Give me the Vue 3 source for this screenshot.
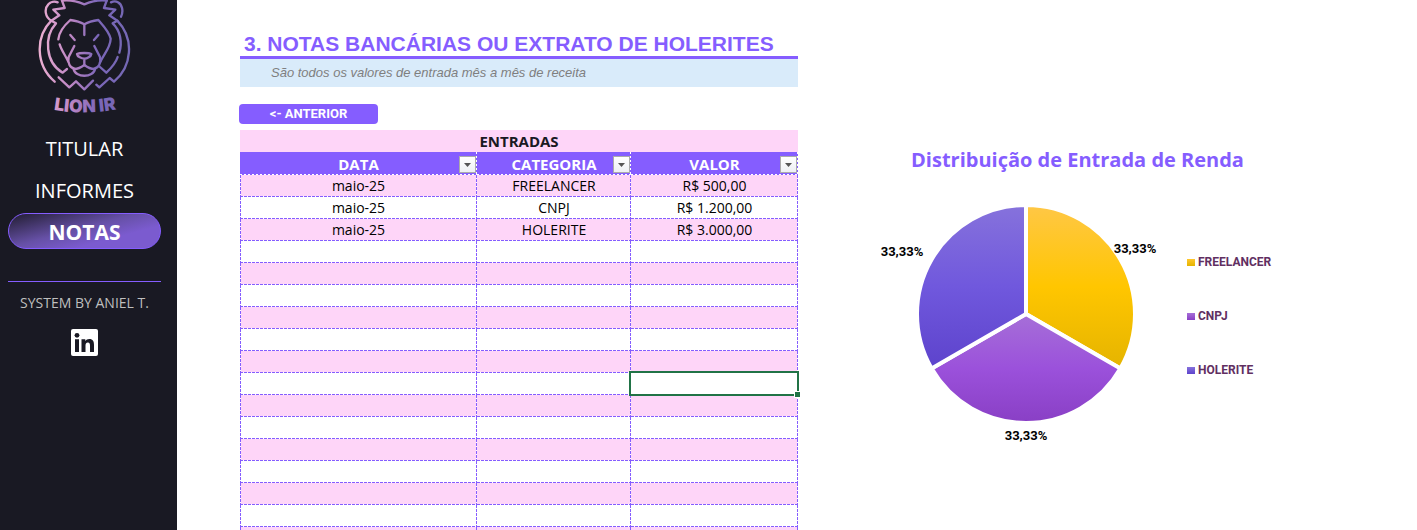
<script setup>
const entries = [
  { date: 'maio-25', category: 'FREELANCER', value: 'R$ 500,00' },
  { date: 'maio-25', category: 'CNPJ', value: 'R$ 1.200,00' },
  { date: 'maio-25', category: 'HOLERITE', value: 'R$ 3.000,00' },
]
const blankRows = 14
const rows = [
  ...entries,
  ...Array.from({ length: blankRows }, () => ({ date: '', category: '', value: '' })),
]
const selectedRow = 9
const columns = ['DATA', 'CATEGORIA', 'VALOR']
const legend = [
  { label: 'FREELANCER', tone: 'gold' },
  { label: 'CNPJ', tone: 'violet' },
  { label: 'HOLERITE', tone: 'indigo' },
]
</script>

<template>
  <div class="page">
    <aside class="sidebar">
      <svg class="logo" viewBox="-1 0 390 372" role="img" aria-label="Lion IR">
        <defs>
          <linearGradient id="lion" gradientUnits="userSpaceOnUse" x1="55" y1="0" x2="328" y2="0">
            <stop offset="0" stop-color="#eeb0d2" />
            <stop offset="0.35" stop-color="#bd86c4" />
            <stop offset="0.65" stop-color="#7b66b8" />
            <stop offset="1" stop-color="#7468b4" />
          </linearGradient>
          <path id="arc" d="M70 324Q194 352 318 322" />
        </defs>
        <g fill="none" stroke="url(#lion)" stroke-width="7" stroke-linecap="round" stroke-linejoin="round">
          <path d="M93 62C74 52 71 26 84 13C91 5 103 3 112 7M125 2L133 24L99 29L117 46L93 62C45 110 45 195 103 245" />
          <path d="M302 50C311 32 304 12 293 7C286 3 278 4 272 7M259 2L251 24L285 29L267 46L291 62C344 118 334 200 281 245L268 234L237 262L228 254" />
          <path d="M125 2C155 -1 174 5 192 13C210 5 229 -1 259 2" />
          <path d="M93 62L107 70C70 110 75 188 127 218L140 207" />
          <path d="M291 62L277 70C301 92 306 128 297 158M292 171C286 190 272 205 258 218L239 201" />
          <path d="M114 118C116 94 132 76 150 60C165 62 180 66 192 73C204 66 219 62 234 60C248 76 266 94 271 116C270 146 248 164 239 188" />
          <path d="M192 73V105M150 105L163 120M234 105L221 120" />
          <path d="M118 133C124 153 137 168 145 188M162 138L145 171C141 189 149 203 162 206M222 138L239 171C243 189 235 203 222 206" />
          <path d="M170 162C178 158 206 158 213 162C212 170 200 176 192 176C184 176 171 170 170 162ZM192 177V195" />
          <path d="M160 207C174 208 184 201 192 195C200 201 210 208 224 207C220 234 164 234 160 207" />
          <path d="M115 232L147 262L167 244L192 268L218 242" />
        </g>
        <text class="logo-name" fill="url(#lion)" text-anchor="middle">
          <textPath href="#arc" startOffset="50%">LION IR</textPath>
        </text>
      </svg>
      <nav class="menu">
        <a href="#titular">TITULAR</a>
        <a href="#informes">INFORMES</a>
        <a href="#notas" class="active" aria-current="page">NOTAS</a>
      </nav>
      <hr class="divider" />
      <p class="credit">SYSTEM BY ANIEL T.</p>
      <a class="linkedin" href="#linkedin" aria-label="LinkedIn">
        <svg viewBox="0 0 27 27" aria-hidden="true">
          <rect width="27" height="27" rx="2" fill="#fff" />
          <g fill="#191923">
            <circle cx="6" cy="6.300" r="2.400" />
            <path d="M4 10.200H8V23H4ZM10.500 10.200H14.300V12C15.100 10.700 16.500 9.900 18.300 9.900C22 9.900 23 12.300 23 16V23H19V16.800C19 14.800 18.700 13.400 16.900 13.400C15 13.400 14.500 14.800 14.500 16.700V23H10.500Z" />
          </g>
        </svg>
      </a>
    </aside>

    <main class="sheet">
      <section class="entries">
        <h1>3. NOTAS BANCÁRIAS OU EXTRATO DE HOLERITES</h1>
        <p class="note">São todos os valores de entrada mês a mês de receita</p>
        <button type="button" class="back">&lt;- ANTERIOR</button>
        <table>
          <colgroup>
            <col class="col-date" />
            <col class="col-category" />
            <col />
          </colgroup>
          <thead>
            <tr class="caption">
              <th colspan="3">ENTRADAS</th>
            </tr>
            <tr class="heads">
              <th v-for="name in columns" :key="name" scope="col">
                {{ name }}
                <button type="button" class="filter" :aria-label="'Filtrar ' + name">
                  <svg viewBox="0 0 15 15" aria-hidden="true"><path d="M4 6H11L7.500 10Z" fill="#555" /></svg>
                </button>
              </th>
            </tr>
          </thead>
          <tbody>
            <tr v-for="(row, i) in rows" :key="i">
              <td>{{ row.date }}</td>
              <td>{{ row.category }}</td>
              <td :class="{ selected: i === selectedRow }">{{ row.value }}</td>
            </tr>
          </tbody>
        </table>
      </section>

      <section class="chart">
        <h2>Distribuição de Entrada de Renda</h2>
        <div class="plot">
          <svg class="pie" viewBox="0 0 279 250" role="img" aria-label="Distribuição de Entrada de Renda">
            <defs>
              <linearGradient id="gold" x1="0" y1="0" x2="0" y2="1">
                <stop offset="0" stop-color="#ffc746" />
                <stop offset="0.5" stop-color="#ffc600" />
                <stop offset="1" stop-color="#e5b400" />
              </linearGradient>
              <linearGradient id="violet" x1="0" y1="0" x2="0" y2="1">
                <stop offset="0" stop-color="#a66fd8" />
                <stop offset="0.5" stop-color="#9b51db" />
                <stop offset="1" stop-color="#893fc5" />
              </linearGradient>
              <linearGradient id="indigo" x1="0" y1="0" x2="0" y2="1">
                <stop offset="0" stop-color="#8672dc" />
                <stop offset="0.5" stop-color="#7058dd" />
                <stop offset="1" stop-color="#5d43cc" />
              </linearGradient>
            </defs>
            <g stroke="#fff" stroke-width="4" stroke-linejoin="round">
              <path fill="url(#gold)" d="M148 119V10A109 109 0 0 1 242.400 173.500Z" />
              <path fill="url(#violet)" d="M148 119L242.400 173.500A109 109 0 0 1 53.600 173.500Z" />
              <path fill="url(#indigo)" d="M148 119L53.600 173.500A109 109 0 0 1 148 10Z" />
            </g>
            <g class="share" text-anchor="middle">
              <text x="257" y="58">33,33%</text>
              <text x="24" y="61">33,33%</text>
              <text x="148" y="245">33,33%</text>
            </g>
          </svg>
          <ul class="legend">
            <li v-for="item in legend" :key="item.label">
              <span class="key" :class="item.tone"></span>{{ item.label }}
            </li>
          </ul>
        </div>
      </section>
    </main>
  </div>
</template>

<style>
body {
  margin: 0;
  background: #fff;
}
</style>

<style scoped>
.page {
  display: flex;
  height: 100vh;
  overflow: hidden;
  font-family: "Open Sans", "Noto Sans", sans-serif;
}
.sidebar {
  flex: 0 0 177px;
  box-sizing: border-box;
  padding: 0 16px 0 8px;
  background: #191923;
  display: flex;
  flex-direction: column;
  align-items: center;
}
.logo {
  width: 130px;
  height: 124px;
  flex: none;
  overflow: visible;
}
.logo-name {
  font: 900 53px Inter, sans-serif;
}
.menu {
  width: 100%;
  margin-top: 4px;
  display: flex;
  flex-direction: column;
}
.menu a {
  height: 42px;
  line-height: 42px;
  text-align: center;
  text-decoration: none;
  color: #fff;
  font-size: 20px;
}
.menu .active {
  box-sizing: border-box;
  height: 36px;
  line-height: 36px;
  margin-top: 1px;
  border: 1px solid #855dff;
  border-radius: 18px;
  font-size: 21px;
  font-weight: 700;
  background: linear-gradient(165deg, #211d30 0%, #6650a6 45%, #7b5bcf 70%, #7b5bcf 100%);
}
.divider {
  align-self: stretch;
  height: 1px;
  margin: 32px 0 0;
  border: 0;
  background: #855dff;
}
.credit {
  margin: 10px 0 0;
  font-size: 14px;
  line-height: 22px;
  white-space: nowrap;
  color: #bfbfbf;
}
.linkedin {
  display: block;
  width: 27px;
  height: 27px;
  margin-top: 15px;
}
.linkedin svg {
  display: block;
}
.sheet {
  flex: 1;
  min-width: 0;
  padding-left: 63px;
  display: grid;
  grid-template-columns: 558fr 619fr;
  align-items: start;
}
.entries {
  padding-top: 32px;
}
h1 {
  margin: 0;
  padding-left: 4px;
  border-bottom: 3px solid #855dff;
  font: 700 21px/24px "Liberation Sans", Arial, sans-serif;
  color: #855dff;
  white-space: nowrap;
}
.note {
  margin: 0;
  padding-left: 31px;
  background: #d9ebfa;
  color: #7f7f7f;
  font: italic 13px/28px "Liberation Sans", Arial, sans-serif;
}
.back {
  display: block;
  width: 139px;
  height: 20px;
  margin: 17px 0 6px -1px;
  padding: 0;
  border: 0;
  border-radius: 4px;
  background: #855dff;
  color: #fff;
  font: 700 13px/20px Roboto, sans-serif;
}
table {
  width: 100%;
  table-layout: fixed;
  border-collapse: separate;
  border-spacing: 0;
  font-size: 14px;
  --line: #855dff;
}
.col-date {
  width: 237px;
}
.col-category {
  width: 154px;
}
th,
td {
  position: relative;
  padding: 0;
  height: 22px;
  line-height: 20px;
  text-align: center;
}
th {
  font-size: 15px;
}
.caption th {
  background: #fed5f8;
  color: #191923;
}
.heads th {
  height: 23px;
  color: #fff;
  background:
    repeating-linear-gradient(90deg, #fff 0 2px, transparent 2px 4px) 0 100% / 100% 1px no-repeat,
    repeating-linear-gradient(#fff 0 2px, transparent 2px 4px) 100% 0 / 1px 100% no-repeat,
    #855dff;
}
tbody td {
  background:
    repeating-linear-gradient(90deg, var(--line) 0 3px, #fff 3px 4px) 0 100% / 100% 1px no-repeat,
    repeating-linear-gradient(var(--line) 0 3px, #fff 3px 4px) 100% 0 / 1px 100% no-repeat,
    repeating-linear-gradient(var(--line) 0 3px, #fff 3px 4px) 0 0 / var(--edge, 0) 100% no-repeat,
    var(--fill, #fff);
}
tbody td:first-child {
  --edge: 1px;
}
tbody tr:nth-child(odd) {
  --fill: #fed5f8;
}
.filter {
  position: absolute;
  right: 1px;
  bottom: 2px;
  box-sizing: border-box;
  width: 17px;
  height: 17px;
  padding: 0;
  border: 1px solid #ababab;
  background: linear-gradient(#fff, #eef0f4);
}
.filter svg {
  display: block;
  width: 15px;
  height: 15px;
}
.selected::before {
  content: "";
  position: absolute;
  z-index: 1;
  inset: -2px -1px -1px -2px;
  border: 2px solid #217346;
}
.selected::after {
  content: "";
  position: absolute;
  z-index: 2;
  right: -3px;
  bottom: -3px;
  width: 5px;
  height: 5px;
  border: 1px solid #fff;
  background: #217346;
}
.chart {
  padding: 146px 140px 0 80px;
}
h2 {
  margin: 0;
  font-size: 20px;
  line-height: 28px;
  text-align: center;
  white-space: nowrap;
  color: #855dff;
}
.plot {
  margin-top: 21px;
  display: flex;
}
.pie {
  flex: 1;
  min-width: 0;
  overflow: visible;
}
.share {
  font: 700 13px Roboto, sans-serif;
}
.legend {
  flex: 0 0 90px;
  margin: 0;
  padding: 57px 0 0 30px;
  list-style: none;
  font: 700 12px/20px Roboto, sans-serif;
  color: #612f61;
}
.legend li {
  display: flex;
  align-items: center;
  gap: 3px;
  margin-bottom: 34px;
}
.key {
  width: 8px;
  height: 7px;
}
.gold {
  background: linear-gradient(#ffc72e, #e5b400);
}
.violet {
  background: linear-gradient(#a66fd8, #893fc5);
}
.indigo {
  background: linear-gradient(#8672dc, #5d43cc);
}
</style>
